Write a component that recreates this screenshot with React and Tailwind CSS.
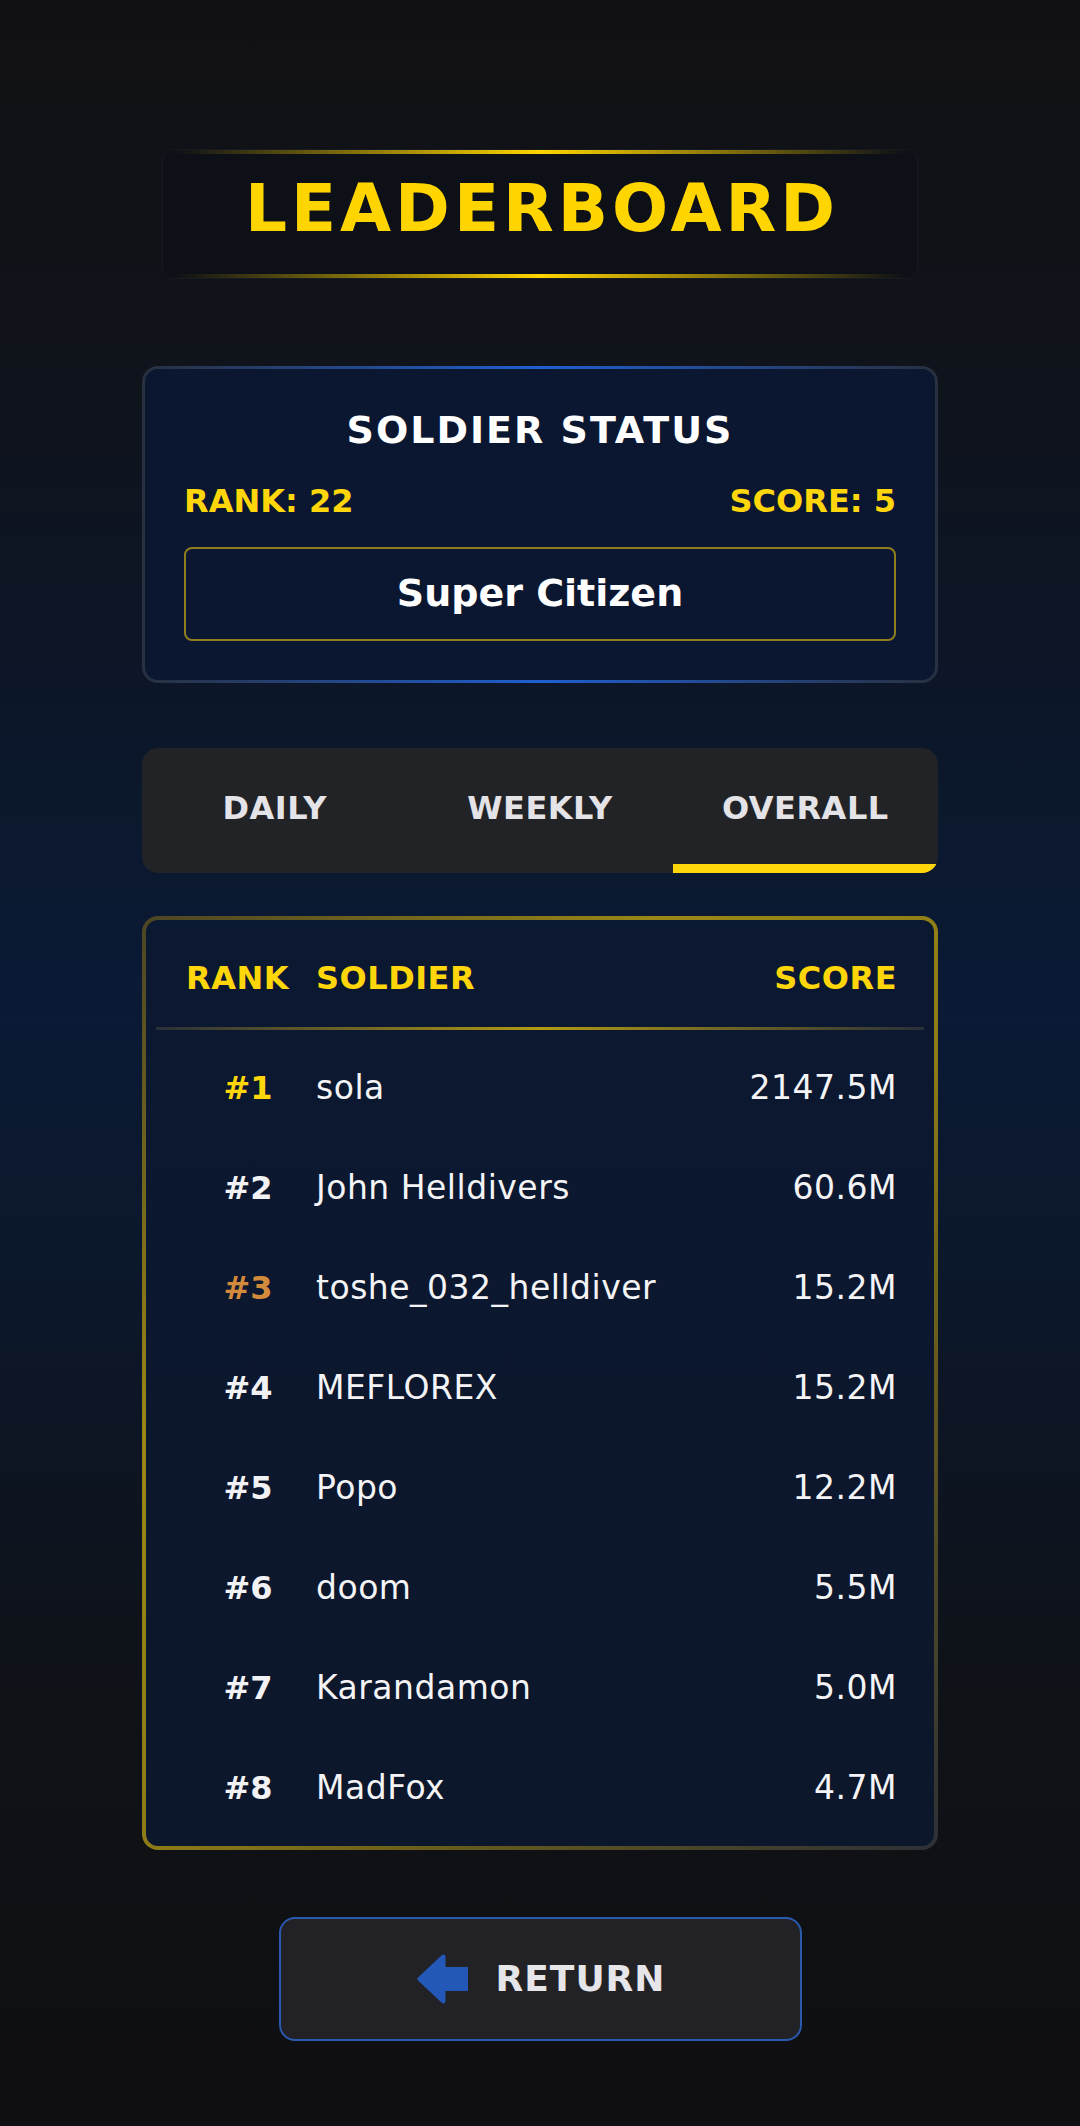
import React from 'react';

const players = [
  { rank: 1, name: 'sola', score: '2147.5M' },
  { rank: 2, name: 'John Helldivers', score: '60.6M' },
  { rank: 3, name: 'toshe_032_helldiver', score: '15.2M' },
  { rank: 4, name: 'MEFLOREX', score: '15.2M' },
  { rank: 5, name: 'Popo', score: '12.2M' },
  { rank: 6, name: 'doom', score: '5.5M' },
  { rank: 7, name: 'Karandamon', score: '5.0M' },
  { rank: 8, name: 'MadFox', score: '4.7M' },
];

const rankColor = (rank) => {
  if (rank === 1) return 'text-[#ffd60a]';
  if (rank === 3) return 'text-[#d48a3c]';
  return 'text-[#f2f2f5]';
};

const tabs = ['DAILY', 'WEEKLY', 'OVERALL'];

const ArrowLeft = () => (
  <svg width="54" height="52" viewBox="0 0 54 52" fill="#2458b8">
    <path d="M3 24.5 L26.5 2.5 Q30 0 30.5 4 V14 H53 V38 H30.5 V48 Q30 52 26.5 49.5 L3 27.5 Q1.5 26 3 24.5 Z" />
  </svg>
);

export default function App() {
  return (
    <div className="min-h-[2126px] w-full flex flex-col items-center pt-[149px] font-['DejaVu_Sans',sans-serif] bg-[linear-gradient(180deg,#111114_0%,#10131a_16%,#0c1628_32%,#0a1a35_47%,#0c1729_62%,#0f1217_80%,#0f0f12_100%)]">
      {/* title */}
      <div className="w-[756px] h-[130px] flex flex-col rounded-xl bg-[#0d1016] border border-[#151920]">
        <div className="h-[4px] mx-[12px] bg-[linear-gradient(90deg,transparent,#ffd500_50%,transparent)]" />
        <div className="flex-1 flex items-center justify-center pb-[10px]">
          <h1 className="text-[66px] leading-none font-bold tracking-[4px] text-[#ffd500] pl-[4px]">LEADERBOARD</h1>
        </div>
        <div className="h-[4px] mx-[12px] bg-[linear-gradient(90deg,transparent,#ffd500_50%,transparent)]" />
      </div>

      {/* soldier status */}
      <div className="mt-[87px] w-[796px] p-[3px] rounded-2xl bg-[linear-gradient(90deg,#283040,#1f5fd0_50%,#283040)]">
        <div className="rounded-[13px] bg-[#0b1731] px-[39px] pt-[39px] pb-[39px] flex flex-col">
          <div className="text-center text-[38px] leading-[1.2] font-bold tracking-[2px] text-white">SOLDIER STATUS</div>
          <div className="mt-[28px] flex justify-between text-[32px] leading-[1.2] font-bold text-[#ffd60a]">
            <span>RANK: 22</span>
            <span>SCORE: 5</span>
          </div>
          <div className="mt-[27px] h-[94px] rounded-lg border-2 border-[#8f7d1d] flex items-center justify-center text-[38px] font-bold text-white">
            Super Citizen
          </div>
        </div>
      </div>

      {/* tabs */}
      <div className="mt-[65px] w-[796px] h-[125px] rounded-2xl overflow-hidden bg-[#222327] grid grid-cols-3">
        {tabs.map((t) => (
          <div key={t} className="flex flex-col">
            <div className="flex-1 flex items-center justify-center pt-[4px] text-[32px] font-bold text-[#e4e4e8] tracking-[0.5px]">{t}</div>
            <div className={t === 'OVERALL' ? 'h-[9px] bg-[#ffd60a]' : 'h-[9px]'} />
          </div>
        ))}
      </div>

      {/* leaderboard */}
      <div className="mt-[43px] w-[796px] p-[4px] rounded-2xl bg-[linear-gradient(135deg,#4a4424_0%,#9a8716_30%,#8c7a17_55%,#6a5e1a_70%,#2d2f35_100%)]">
        <div className="rounded-[12px] bg-[linear-gradient(180deg,#0b1831,#0d172b)] pb-[8px]">
          <div className="h-[107px] pl-[40px] pr-[37px] pt-[10px] flex items-center text-[32px] font-bold tracking-[0.5px] text-[#ffd60a]">
            <span className="w-[130px]">RANK</span>
            <span className="flex-1">SOLDIER</span>
            <span>SCORE</span>
          </div>
          <div className="h-[3px] mx-[10px] bg-[linear-gradient(90deg,#2a3038,#b39a12_50%,#2a3038)]" />
          <div className="mt-[8px] flex flex-col">
            {players.map((p) => (
              <div key={p.rank} className="h-[100px] pl-[40px] pr-[37px] flex items-center text-[33px] tracking-[0.5px] text-[#f4f4f6]">
                <span className={`w-[130px] pr-[6px] text-center font-bold text-[32px] tracking-normal ${rankColor(p.rank)}`}>#{p.rank}</span>
                <span className="flex-1">{p.name}</span>
                <span>{p.score}</span>
              </div>
            ))}
          </div>
        </div>
      </div>

      {/* return */}
      <button className="mt-[67px] w-[523px] h-[124px] rounded-2xl border-2 border-[#2a5aad] bg-[#222226] flex items-center justify-center gap-[27px]">
        <ArrowLeft />
        <span className="text-[36px] font-bold tracking-[1px] text-[#e6e6ea]">RETURN</span>
      </button>
    </div>
  );
}
